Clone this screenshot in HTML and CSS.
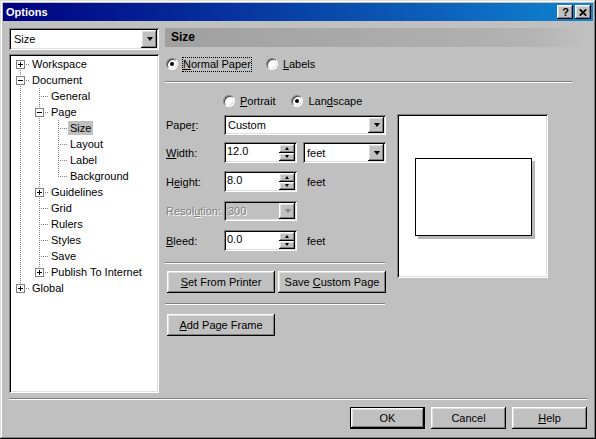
FILE: index.html
```html
<!DOCTYPE html>
<html>
<head>
<meta charset="utf-8">
<title>Options</title>
<link rel="stylesheet" href="styles.css">
</head>
<body>
<div class="window">
  <div class="titlebar">
    <span class="title">Options</span>
    <span class="tbtn raised help">?</span>
    <span class="tbtn raised close"><svg width="8" height="7" viewBox="0 0 8 7"><path d="M0.8 0.3L7.2 6.7M7.2 0.3L0.8 6.7" stroke="#000" stroke-width="1.7"/></svg></span>
  </div>

  <div class="main">
    <div class="side">
      <div class="combo sunken side-combo"><span class="cv">Size</span><span class="dd raised"><i class="arr"></i></span></div>
      <div class="tree sunken">
        <div class="row"><span class="cell r"><svg class="exp" width="9" height="9" viewBox="0 0 9 9"><rect x=".5" y=".5" width="8" height="8" fill="#fff" stroke="#808080"/><path d="M2 4.5h5M4.5 2v5" stroke="#000"/></svg></span><span class="lbl">Workspace</span></div>
        <div class="row"><span class="cell t"><svg class="exp" width="9" height="9" viewBox="0 0 9 9"><rect x=".5" y=".5" width="8" height="8" fill="#fff" stroke="#808080"/><path d="M2 4.5h5" stroke="#000"/></svg></span><span class="lbl">Document</span></div>
        <div class="row"><span class="cell v"></span><span class="cell t"></span><span class="lbl">General</span></div>
        <div class="row"><span class="cell v"></span><span class="cell t"><svg class="exp" width="9" height="9" viewBox="0 0 9 9"><rect x=".5" y=".5" width="8" height="8" fill="#fff" stroke="#808080"/><path d="M2 4.5h5" stroke="#000"/></svg></span><span class="lbl">Page</span></div>
        <div class="row"><span class="cell v"></span><span class="cell v"></span><span class="cell t"></span><span class="lbl sel">Size</span></div>
        <div class="row"><span class="cell v"></span><span class="cell v"></span><span class="cell t"></span><span class="lbl">Layout</span></div>
        <div class="row"><span class="cell v"></span><span class="cell v"></span><span class="cell t"></span><span class="lbl">Label</span></div>
        <div class="row"><span class="cell v"></span><span class="cell v"></span><span class="cell l"></span><span class="lbl">Background</span></div>
        <div class="row"><span class="cell v"></span><span class="cell t"><svg class="exp" width="9" height="9" viewBox="0 0 9 9"><rect x=".5" y=".5" width="8" height="8" fill="#fff" stroke="#808080"/><path d="M2 4.5h5M4.5 2v5" stroke="#000"/></svg></span><span class="lbl">Guidelines</span></div>
        <div class="row"><span class="cell v"></span><span class="cell t"></span><span class="lbl">Grid</span></div>
        <div class="row"><span class="cell v"></span><span class="cell t"></span><span class="lbl">Rulers</span></div>
        <div class="row"><span class="cell v"></span><span class="cell t"></span><span class="lbl">Styles</span></div>
        <div class="row"><span class="cell v"></span><span class="cell t"></span><span class="lbl">Save</span></div>
        <div class="row"><span class="cell v"></span><span class="cell l"><svg class="exp" width="9" height="9" viewBox="0 0 9 9"><rect x=".5" y=".5" width="8" height="8" fill="#fff" stroke="#808080"/><path d="M2 4.5h5M4.5 2v5" stroke="#000"/></svg></span><span class="lbl">Publish To Internet</span></div>
        <div class="row"><span class="cell l"><svg class="exp" width="9" height="9" viewBox="0 0 9 9"><rect x=".5" y=".5" width="8" height="8" fill="#fff" stroke="#808080"/><path d="M2 4.5h5M4.5 2v5" stroke="#000"/></svg></span><span class="lbl">Global</span></div>
      </div>
    </div>

    <div class="panel">
      <div class="phead">Size</div>
      <div class="kind">
        <span class="ropt"><span class="rb on"></span><span class="rt focus"><u>N</u>ormal Paper</span></span>
        <span class="ropt o-labels"><span class="rb"></span><span class="rt"><u>L</u>abels</span></span>
      </div>
      <div class="sep sep-kind"></div>
      <div class="orient">
        <span class="ropt"><span class="rb"></span><span class="rt"><u>P</u>ortrait</span></span>
        <span class="ropt o-land"><span class="rb on"></span><span class="rt">Lan<u>d</u>scape</span></span>
      </div>
      <div class="body">
        <div class="form">
          <div class="frow r-paper"><span class="flbl">Pape<u>r</u>:</span><div class="combo sunken c-paper"><span class="cv">Custom</span><span class="dd raised"><i class="arr"></i></span></div></div>
          <div class="frow r-width"><span class="flbl"><u>W</u>idth:</span>
            <div class="spin sunken"><span class="sv">12.0</span><span class="sbtns"><span class="sb raised"><i class="sa up"></i></span><span class="sb raised"><i class="sa dn"></i></span></span></div>
            <div class="combo sunken c-unit"><span class="cv">feet</span><span class="dd raised"><i class="arr"></i></span></div>
          </div>
          <div class="frow r-height"><span class="flbl">H<u>e</u>ight:</span>
            <div class="spin sunken"><span class="sv">8.0</span><span class="sbtns"><span class="sb raised"><i class="sa up"></i></span><span class="sb raised"><i class="sa dn"></i></span></span></div>
            <span class="unit">feet</span>
          </div>
          <div class="frow r-res"><span class="flbl dis">Resol<u>u</u>tion:</span>
            <div class="combo sunken c-dis"><span class="cv dis">300</span><span class="dd raised"><i class="arr arr-dis"></i></span></div>
          </div>
          <div class="frow r-bleed"><span class="flbl"><u>B</u>leed:</span>
            <div class="spin sunken"><span class="sv">0.0</span><span class="sbtns"><span class="sb raised"><i class="sa up"></i></span><span class="sb raised"><i class="sa dn"></i></span></span></div>
            <span class="unit">feet</span>
          </div>
          <div class="sep sep-form"></div>
          <div class="btnrow">
            <span class="btn raised wide"><span><u>S</u>et From Printer</span></span>
            <span class="btn raised wide"><span>Save <u>C</u>ustom Page</span></span>
          </div>
          <div class="sep sep-form2"></div>
          <span class="btn raised wide add"><span><u>A</u>dd Page Frame</span></span>
        </div>
        <div class="preview sunken">
          <div class="page"></div>
        </div>
      </div>
    </div>
  </div>

  <div class="sep sep-foot"></div>
  <div class="footer">
    <span class="btn default">OK</span>
    <span class="btn raised">Cancel</span>
    <span class="btn raised"><span><u>H</u>elp</span></span>
  </div>
</div>
</body>
</html>
```

FILE: styles.css
```css
* { box-sizing: border-box; }
html, body { margin: 0; padding: 0; }
body {
  width: 596px;
  height: 439px;
  overflow: hidden;
  background: #c0c0c0;
  font-family: "Liberation Sans", Arial, sans-serif;
  font-size: 11px;
  color: #000;
}
u { text-decoration: underline; text-underline-offset: 1px; }

.raised {
  background: #c0c0c0;
  box-shadow: inset -1px -1px 0 #000, inset 1px 1px 0 #fff, inset -2px -2px 0 #808080, inset 2px 2px 0 #dfdfdf;
}
.sunken {
  box-shadow: inset 1px 1px 0 #808080, inset -1px -1px 0 #fff, inset 2px 2px 0 #000, inset -2px -2px 0 #dfdfdf;
}

.window {
  width: 596px;
  height: 439px;
  padding: 3px;
  display: flex;
  flex-direction: column;
  background: #c0c0c0;
  box-shadow: inset -1px -1px 0 #000, inset 1px 1px 0 #dfdfdf, inset -2px -2px 0 #808080, inset 2px 2px 0 #fff;
}

/* title bar */
.titlebar {
  height: 18px;
  flex: none;
  display: flex;
  align-items: center;
  padding: 0 2px 0 3px;
  background: linear-gradient(to right, #000080, #1084d0);
}
.title { flex: 1; color: #fff; font-weight: bold; font-size: 11px; line-height: 14px; }
.tbtn {
  width: 16px;
  height: 14px;
  display: flex;
  align-items: center;
  justify-content: center;
  font-weight: bold;
  font-size: 11px;
  line-height: 12px;
}
.tbtn.help { margin-right: 2px; padding-left: 1px; }

/* main */
.main {
  height: 372px;
  flex: none;
  display: flex;
  gap: 6px;
  padding: 7px 6px 0;
}
.side {
  width: 150px;
  flex: none;
  display: flex;
  flex-direction: column;
  gap: 4px;
}

/* combo */
.combo {
  display: flex;
  align-items: stretch;
  background: #fff;
  padding: 2px;
}
.cv { flex: 1; padding-left: 2px; white-space: nowrap; display: flex; align-items: center; }
.dd {
  width: 16px;
  flex: none;
  display: flex;
  align-items: center;
  justify-content: center;
}
.arr {
  display: block;
  width: 1px;
  height: 0;
  border-left: 3px solid transparent;
  border-right: 3px solid transparent;
  border-top: 4px solid #000;
  margin-left: 1px;
}
.arr-dis { border-top-color: #808080; }
.side-combo { height: 22px; }
.side-combo .cv { padding-left: 3px; }

/* tree */
.tree {
  flex: 1;
  background: #fff;
  padding: 2px 2px 0;
  --vd: repeating-linear-gradient(to bottom, #808080 0 1px, transparent 1px 2px);
  --hd: repeating-linear-gradient(to right, #808080 0 1px, transparent 1px 2px);
}
.row { display: flex; align-items: flex-start; height: 16px; }
.cell {
  width: 19px;
  height: 16px;
  flex: none;
  display: flex;
  justify-content: center;
  padding-top: 4px;
  background-repeat: no-repeat;
}
.exp { display: block; }
.cell.v { background-image: var(--vd); background-size: 1px 16px; background-position: 9px 0; }
.cell.t { background-image: var(--vd), var(--hd); background-size: 1px 16px, 10px 1px; background-position: 9px 0, 9px 8px; }
.cell.l { background-image: var(--vd), var(--hd); background-size: 1px 9px, 10px 1px; background-position: 9px 0, 9px 8px; }
.cell.r { background-image: var(--vd), var(--hd); background-size: 1px 8px, 10px 1px; background-position: 9px 8px, 9px 8px; }
.lbl { padding: 0 2px; line-height: 14px; height: 14px; margin-top: 1px; white-space: nowrap; }
.lbl.sel { background: #c0c0c0; }

/* right panel */
.panel { flex: 1; display: flex; flex-direction: column; }
.phead {
  height: 19px;
  line-height: 19px;
  font-weight: bold;
  font-size: 12px;
  padding-left: 6px;
  background: linear-gradient(to right, #a0a0a0 0%, #b2b2b2 85%, #c0c0c0 100%);
}
.kind { display: flex; align-items: center; height: 16px; margin-top: 9px; padding-left: 1px; }
.ropt { display: flex; align-items: center; gap: 5px; white-space: nowrap; }
.rt { line-height: 13px; }
.rt.focus { border: 1px dotted #000; margin-left: -1px; padding-right: 0; }
.o-labels { margin-left: 14px; }
.rb {
  width: 12px;
  height: 12px;
  flex: none;
  border-radius: 50%;
  background: #fff;
  border: 1px solid;
  border-color: #808080 #fff #fff #808080;
  box-shadow: inset 1px 1px 0 #404040, inset -1px -1px 0 #dfdfdf;
  display: grid;
  place-items: center;
}
.rb.on::after {
  content: "";
  width: 4px;
  height: 4px;
  border-radius: 50%;
  background: #000;
}

.sep { height: 2px; border-top: 1px solid #808080; border-bottom: 1px solid #fff; flex: none; }
.sep-kind { margin: 9px 15px 0 0; }

.orient { display: flex; align-items: center; height: 14px; margin-top: 11px; padding-left: 58px; }
.o-land { margin-left: 16px; }

.body { display: flex; margin-top: 6px; align-items: flex-start; }
.form { width: 221px; flex: none; display: flex; flex-direction: column; align-items: flex-start; }
.frow { display: flex; align-items: center; }
.flbl { width: 59px; flex: none; padding-left: 1px; white-space: nowrap; }
.dis { color: #808080; text-shadow: 1px 1px 0 #fff; }

.r-paper { margin-top: 1px; height: 20px; }
.c-paper { width: 162px; height: 20px; }
.r-width { margin-top: 7px; height: 21px; }
.r-height { margin-top: 8px; height: 21px; }
.r-res { margin-top: 9px; height: 20px; }
.r-bleed { margin-top: 9px; height: 21px; }
.c-unit { width: 83px; height: 21px; margin-left: 6px; }
.c-dis { width: 73px; height: 20px; background: #c0c0c0; }
.unit { margin-left: 10px; }

.spin {
  width: 73px;
  height: 21px;
  display: flex;
  background: #fff;
  padding: 2px;
}
.sv { flex: 1; padding-left: 1px; line-height: 14px; }
.sbtns { width: 16px; display: flex; flex-direction: column; }
.sb { flex: 1; display: flex; align-items: center; justify-content: center; }
.sa { display: block; width: 1px; height: 0; border-left: 2px solid transparent; border-right: 2px solid transparent; }
.sa.up { border-bottom: 3px solid #000; }
.sa.dn { border-top: 3px solid #000; }

.sep-form { width: 220px; margin-top: 11px; }
.sep-form2 { width: 220px; margin-top: 10px; }
.btnrow { display: flex; gap: 3px; margin-top: 7px; padding-left: 2px; }

.btn {
  width: 75px;
  height: 22px;
  display: flex;
  align-items: center;
  justify-content: center;
  white-space: nowrap;
  flex: none;
}
.btn.wide { width: 108px; }
.btn.add { margin-top: 9px; margin-left: 2px; }
.btn.default {
  background: #c0c0c0;
  border: 1px solid #000;
  box-shadow: inset -1px -1px 0 #000, inset 1px 1px 0 #fff, inset -2px -2px 0 #808080, inset 2px 2px 0 #dfdfdf;
}

.preview {
  width: 151px;
  height: 164px;
  flex: none;
  margin-left: 11px;
  background: #fff;
  display: flex;
  align-items: center;
  justify-content: center;
  padding: 2px 0 0 2px;
}
.page {
  width: 117px;
  height: 78px;
  border: 1px solid #000;
  background: #fff;
  box-shadow: 3px 3px 0 #b8b8b8;
}

/* footer */
.sep-foot { margin: 5px 6px 0; }
.footer {
  display: flex;
  justify-content: flex-end;
  gap: 6px;
  padding: 7px 6px;
}
```
